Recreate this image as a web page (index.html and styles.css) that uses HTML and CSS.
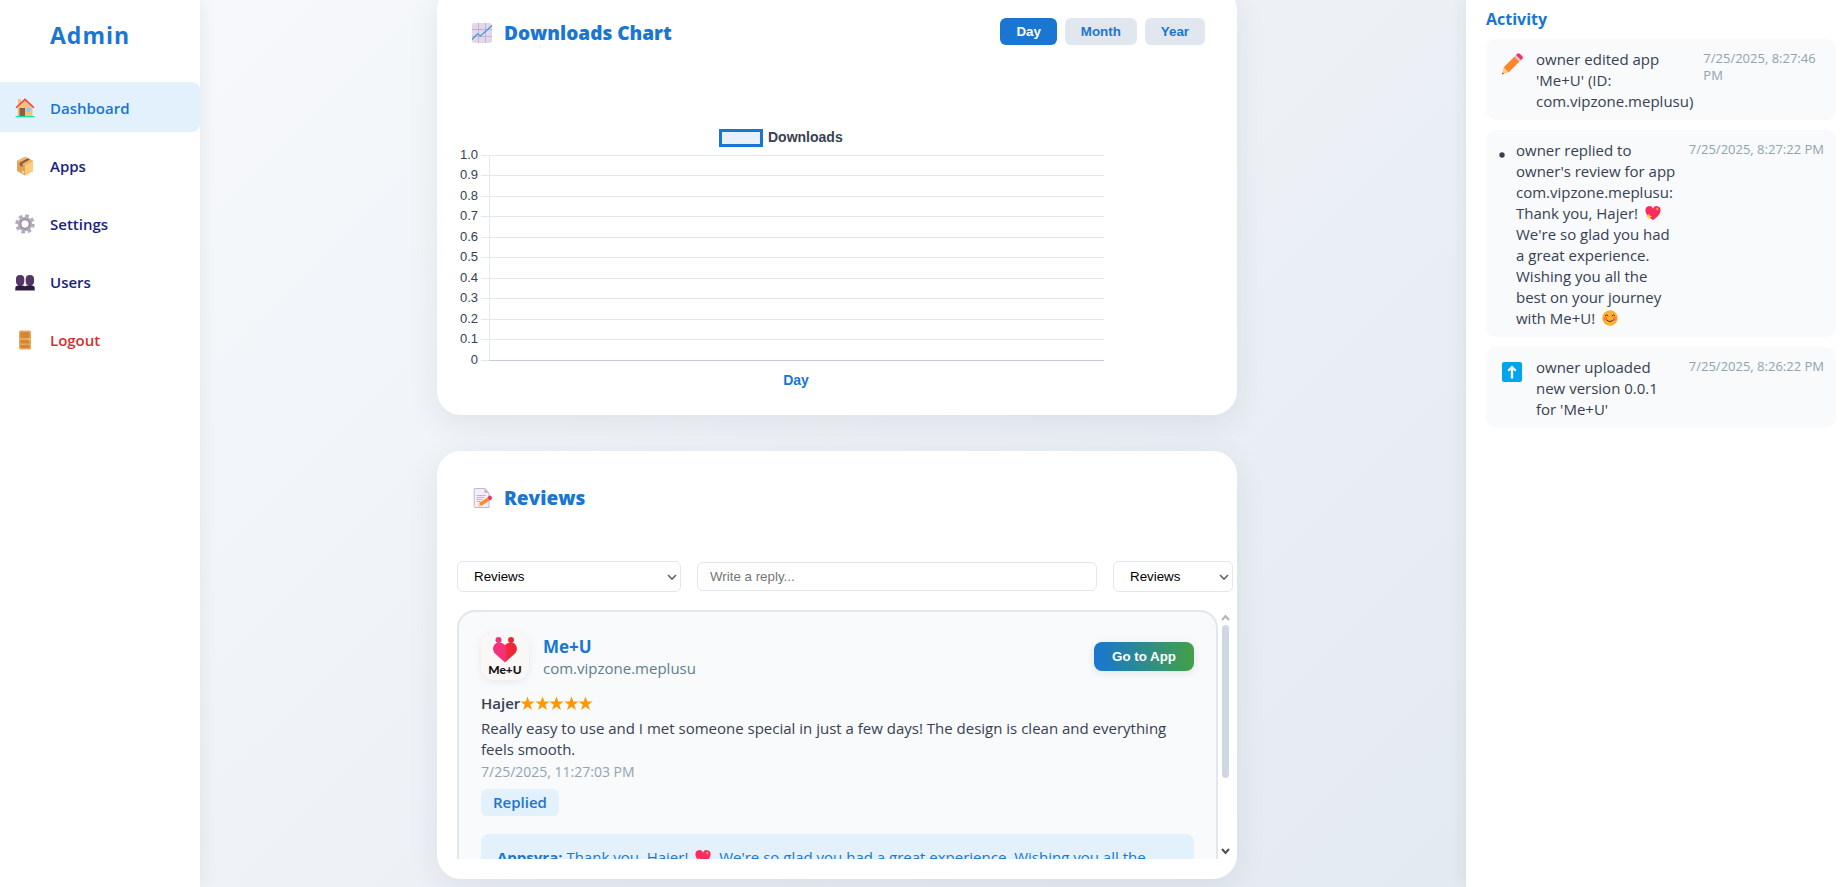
FILE: index.html
```html
<!DOCTYPE html>
<html lang="en">
<head>
<meta charset="utf-8">
<title>Admin</title>
<link rel="stylesheet" href="styles.css">
</head>
<body>
<svg class="defs" aria-hidden="true">
  <symbol id="heart" viewBox="0 0 16 16">
    <path d="M8 15.2C5 13 .4 9.600 .4 5.300a4 4 0 0 1 7.600-1.900 4 4 0 0 1 7.600 1.900C15.600 9.600 11 13 8 15.200Z" fill="#fb2b5f"/>
    <path d="m4 8.500.9 2.300 2.300.9-2.300.9L4 15l-.9-2.400-2.300-.9 2.300-.9ZM12.200 2.300l.5 1.300 1.300.5-1.300.5-.5 1.300-.5-1.300-1.300-.5 1.300-.5Z" fill="#ffd23c"/>
  </symbol>
</svg>
<div class="layout">
  <aside class="sidebar">
    <h1 class="brand">Admin</h1>
    <nav class="nav">
      <a class="nav-link active" href="#">
        <svg class="nav-icon" viewBox="0 0 20 20"><path d="M3 1h3v5H3z" fill="#f3c27d"/><path d="M2.500 9 10 2l7.500 7v9h-15z" fill="#f3c27d"/><path d="M1 9.800 10 1.400l9 8.400" fill="none" stroke="#fb3a3a" stroke-width="1.500"/><path d="M4.500 10h5.500v8H4.500z" fill="#8d5a4d"/><path d="M11.500 10h4v4h-4z" fill="#8cc8fb"/><path d="M.5 18h19v1.200H.5z" fill="#0eea98"/></svg>
        Dashboard</a>
      <a class="nav-link" href="#">
        <svg class="nav-icon" viewBox="0 0 20 20"><path d="M10 .8 18 5v10l-8 4.500L2 15V5z" fill="#e6a154"/><path d="M10 9.200 18 5v10l-8 4.500z" fill="#ffce7c"/><path d="M10 .8 18 5l-8 4.200L2 5z" fill="#f0b866"/><path d="m4.800 6.500 8-4.200 2.200 1.200-7.500 4.200V11l-2.700-1.500z" fill="#8d5a4d"/><path d="m7 14.700 2 1v1.800l-2-1z" fill="#f5e9dd"/></svg>
        Apps</a>
      <a class="nav-link" href="#">
        <svg class="nav-icon" viewBox="0 0 20 20"><g fill="none" stroke="#b4aabd"><circle cx="10" cy="10" r="8" stroke-width="3.500" stroke-dasharray="3.400 2.883"/><circle cx="10" cy="10" r="5.800" stroke-width="3"/><circle cx="10" cy="10" r="4.400" stroke="#9689a2" stroke-width="1.500"/></g></svg>
        Settings</a>
      <a class="nav-link" href="#">
        <svg class="nav-icon" viewBox="0 0 20 20"><g fill="#533566"><rect x="1" y="3" width="8.300" height="10.500" rx="4"/><rect x="10.700" y="3" width="8.300" height="10.500" rx="4"/><path d="M3.500 10h3v5h-3zM13.500 10h3v5h-3z"/></g><path d="M.3 18.500V16q0-2.500 3-2.500h3.900q2.300 0 2.800 1 .5-1 2.800-1h3.900q3 0 3 2.500v2.500z" fill="#321b41"/></svg>
        Users</a>
      <a class="nav-link logout" href="#">
        <svg class="nav-icon" viewBox="0 0 20 20"><rect x="4" y=".5" width="12" height="19" rx="1.500" fill="#eaa75a"/><path d="M5.500 2h9v6h-9zM5.500 10h9v3.500h-9zM5.500 15h9v3h-9z" fill="#d28638"/><circle cx="14" cy="9.500" r="1" fill="#ffcf66"/></svg>
        Logout</a>
    </nav>
  </aside>

  <main class="main">
    <section class="card">
      <header class="card-head">
        <h2 class="card-title">
          <svg class="title-icon" viewBox="0 0 20 20"><rect width="20" height="20" rx="2.500" fill="#e2d8ea"/><path d="M0 6.500h20M0 13.500h20M6.500 0v20M13.500 0v20" stroke="#c2b4cc"/><path d="m0 16.500 5.500-5.700L8.500 13 20 2.500" fill="none" stroke="#3b9be8" stroke-width="1.300"/></svg>
          Downloads Chart</h2>
        <div class="ranges">
          <button class="range selected" type="button">Day</button>
          <button class="range" type="button">Month</button>
          <button class="range" type="button">Year</button>
        </div>
      </header>
      <svg class="chart" viewBox="0 0 660 270" role="img" aria-label="Downloads by day">
        <rect class="swatch" x="263.500" y="5.500" width="41" height="15"/>
        <text class="legend" x="311" y="17">Downloads</text>
        <path class="grid" d="M24 30.500h623M24 50.500h623M24 71.500h623M24 91.500h623M24 112.500h623M24 132.500h623M24 153.500h623M24 173.500h623M24 194.500h623M24 214.500h623M24 235.500h8M32.500 30v205"/>
        <path class="axis" d="M32 235.500h615"/>
        <g class="ticks">
          <text x="21" y="34">1.0</text><text x="21" y="54">0.9</text><text x="21" y="75">0.8</text><text x="21" y="95">0.7</text><text x="21" y="116">0.6</text><text x="21" y="136">0.5</text><text x="21" y="157">0.4</text><text x="21" y="177">0.3</text><text x="21" y="198">0.2</text><text x="21" y="218">0.1</text><text x="21" y="239">0</text>
        </g>
        <text class="axis-title" x="339" y="260">Day</text>
      </svg>
    </section>

    <section class="card">
      <header class="card-head">
        <h2 class="card-title">
          <svg class="title-icon" viewBox="0 0 20 20"><path d="M3 .5h10L17 5v14.500H3q-.8 0-.8-.8V1.300Q2.200.5 3 .5Z" fill="#f3eef8" stroke="#c3b6cd"/><path d="M12.500.5V5H17z" fill="#c3b6cd"/><path d="M4.500 7.500h9M4.500 9.500h8M4.500 11.500h6M4.500 13.500h4" stroke="#b3a4bf" stroke-width=".8"/><path d="m7 15 8.500-5.500 2 3L9 18z" fill="#ff8b2c"/><path d="m7 15 2 3-3 .7z" fill="#ffce7c"/><path d="m15.500 9.500 1.500-1.700q1-1 2.200.5l.6 1.200q.7 1.500-.8 2.200l-1.500.8z" fill="#f8315f"/></svg>
          Reviews</h2>
      </header>
      <div class="filters">
        <select class="field app-filter" aria-label="App"><option>Reviews</option></select>
        <input class="field reply-input" type="text" placeholder="Write a reply..." aria-label="Write a reply">
        <select class="field sort-filter" aria-label="Sort"><option>Reviews</option></select>
      </div>
      <div class="review-list">
        <article class="review">
          <header class="app-row">
            <svg class="app-logo" viewBox="0 0 48 48" role="img" aria-label="Me+U logo">
              <defs><linearGradient id="lg"><stop offset=".48" stop-color="#f5317a"/><stop offset=".62" stop-color="#ee2737"/></linearGradient></defs>
              <rect width="48" height="48" rx="14" fill="#faf8f6"/>
              <circle cx="17.500" cy="8" r="3" fill="#f5317a"/><circle cx="30" cy="8" r="3" fill="#ee2737"/>
              <path d="M24 30.500 14 21.500c-5.500-6.500 2-15.500 10-8.500 8-7 15.500 2 10 8.500z" fill="url(#lg)"/>
              <text class="logo-text" x="24" y="42">Me+U</text>
            </svg>
            <div class="app-info">
              <h3 class="app-name">Me+U</h3>
              <p class="app-package">com.vipzone.meplusu</p>
            </div>
            <button class="go" type="button">Go to App</button>
          </header>
          <div class="author">Hajer<svg class="stars" viewBox="0 0 75 15" role="img" aria-label="5 stars"><defs><path id="star" d="m7.500.5 1.800 5h5.200l-4.200 3.200 1.600 5.200-4.400-3.200-4.400 3.200 1.600-5.200L.5 5.500h5.200z" fill="#ff9800"/></defs><use href="#star"/><use href="#star" x="15"/><use href="#star" x="29"/><use href="#star" x="44"/><use href="#star" x="58"/></svg></div>
          <p class="review-text">Really easy to use and I met someone special in just a few days! The design is clean and everything feels smooth.</p>
          <time class="review-date">7/25/2025, 11:27:03 PM</time>
          <div><span class="badge">Replied</span></div>
          <p class="reply"><strong>Appsyra:</strong> Thank you, Hajer! <svg class="emoji" viewBox="0 0 16 16"><use href="#heart"/></svg> We're so glad you had a great experience. Wishing you all the best on your journey with Me+U!</p>
        </article>
        <div class="scrollbar" aria-hidden="true">
          <svg class="arrow" viewBox="0 0 9 15"><path d="m1 10 3.500-4L8 10" stroke="#b4b4b4"/></svg>
          <div class="thumb"></div>
          <svg class="arrow" viewBox="0 0 9 15"><path d="m1 5 3.500 4L8 5" stroke="#505050"/></svg>
        </div>
      </div>
    </section>
  </main>

  <aside class="activity">
    <h2 class="activity-title">Activity</h2>
    <ul class="feed">
      <li class="event">
        <svg class="event-icon" viewBox="0 0 22 22"><path d="m2.500 14.500 11-11 5 5-11 11z" fill="#ff862d"/><path d="m2.500 14.500 5 5-6.500 2z" fill="#ffce7c"/><path d="m13.500 3.500 2-2 5 5-2 2z" fill="#d3c6da"/><path d="m15 2 1.200-1.200q1.300-1.200 2.600 0l2.500 2.500q1.200 1.300 0 2.600L20 7z" fill="#f8315f"/><path d="m1 21.500.7-2 1.300 1.300z" fill="#533566"/></svg>
        <p class="event-text">owner edited app 'Me+U' (ID: com.vipzone.meplusu)</p>
        <time class="event-time">7/25/2025, 8:27:46 PM</time>
      </li>
      <li class="event">
        <svg class="event-dot" viewBox="0 0 6 22"><circle cx="3" cy="13" r="2.700" fill="#374151"/></svg>
        <p class="event-text">owner replied to owner's review for app com.vipzone.meplusu: Thank you, Hajer! <svg class="emoji" viewBox="0 0 16 16"><use href="#heart"/></svg> We're so glad you had a great experience. Wishing you all the best on your journey with Me+U! <svg class="emoji" viewBox="0 0 16 16"><circle cx="8" cy="8" r="7.700" fill="#ffb02e"/><circle cx="3.300" cy="8.700" r="2" fill="#ff7a3d"/><circle cx="12.700" cy="8.700" r="2" fill="#ff7a3d"/><path d="M3 6.200q1.600-2.800 3.300 0M9.700 6.200q1.700-2.800 3.300 0M4.600 9.800q3.400 3.400 6.800 0" fill="none" stroke="#402a32"/></svg></p>
        <time class="event-time">7/25/2025, 8:27:22 PM</time>
      </li>
      <li class="event">
        <svg class="event-icon" viewBox="0 0 22 22"><rect x="1" y="1" width="20" height="20" rx="2" fill="#00a6ed"/><path d="M11 4.500 15.500 9l-1.300 1.400-2-1.900V17.500H9.800v-9l-2 1.900L6.500 9z" fill="#fff"/></svg>
        <p class="event-text">owner uploaded new version 0.0.1 for 'Me+U'</p>
        <time class="event-time">7/25/2025, 8:26:22 PM</time>
      </li>
    </ul>
  </aside>
</div>
</body>
</html>
```

FILE: styles.css
```css
* { box-sizing: border-box; }

body {
  margin: 0;
  font-family: "Open Sans", "Noto Sans", sans-serif;
  font-size: 15px;
  line-height: 21px;
  color: #374151;
}

h1, h2, h3, p, ul { margin: 0; padding: 0; }

.defs { display: none; }

.layout {
  display: grid;
  grid-template-columns: 200px 1fr 382px;
  height: 100vh;
  overflow: hidden;
  background: linear-gradient(135deg, #f8fafc 0%, #e0e7ef 100%);
}

/* Sidebar */
.sidebar {
  background: #fff;
  box-shadow: 2px 0 16px rgba(30, 41, 59, 0.07);
}

.brand {
  padding: 19px 0 31px 50px;
  font-size: 23px;
  line-height: 32px;
  letter-spacing: 1px;
  color: #1976d2;
}

.nav {
  display: flex;
  flex-direction: column;
  gap: 8px;
}

.nav-link {
  display: flex;
  align-items: center;
  gap: 15px;
  height: 50px;
  padding: 2px 16px 0 15px;
  border-radius: 0 8px 8px 0;
  font-weight: 600;
  color: #1a237e;
  text-decoration: none;
}

.nav-link.active {
  background: #e3f1fd;
  color: #1976d2;
}

.nav-link.logout { color: #d32f2f; }

.nav-icon { width: 20px; height: 20px; }

/* Main column */
.main {
  display: flex;
  flex-direction: column;
  align-items: center;
  gap: 36px;
  margin-top: -14px;
  padding-left: 8px;
}

.card {
  flex-shrink: 0;
  width: 100%;
  max-width: 800px;
  padding: 20px;
  border-radius: 24px;
  background: #fff;
  box-shadow: 0 8px 32px rgba(30, 41, 59, 0.08);
}

.card-head {
  display: flex;
  justify-content: space-between;
  align-items: flex-start;
  padding: 12px;
}

.card-title {
  display: flex;
  align-items: center;
  gap: 12px;
  padding-left: 3px;
  font-size: 19px;
  font-weight: 800;
  line-height: 30px;
  color: #1976d2;
}

.title-icon { width: 20px; height: 20px; }

.ranges { display: flex; gap: 8px; }

.range {
  padding: 6px 16px;
  border: 0;
  border-radius: 6px;
  background: #e0e7ef;
  color: #1976d2;
  font-family: "Liberation Sans", Arial, sans-serif;
  font-weight: bold;
}

.range.selected { background: #1976d2; color: #fff; }

/* Chart */
.chart {
  display: block;
  width: 100%;
  max-width: 660px;
  margin-top: 65px;
  font-family: "Liberation Sans", Arial, sans-serif;
  font-size: 13px;
  fill: #374151;
}

.swatch { fill: #e8f1fb; stroke: #1976d2; stroke-width: 3px; }
.legend { font-size: 14px; font-weight: bold; }
.grid { fill: none; stroke: #e0e7ef; }
.axis { fill: none; stroke: #c5cdd6; }
.ticks { text-anchor: end; }

.axis-title {
  font-size: 14px;
  font-weight: bold;
  text-anchor: middle;
  fill: #1976d2;
}

/* Reviews */
.filters {
  display: flex;
  align-items: center;
  gap: 16px;
  margin: 36px -16px 18px 0;
}

.field {
  min-width: 0;
  border: 1px solid #e0e7ef;
  border-radius: 6px;
  background: #fff;
  font-family: "Liberation Sans", Arial, sans-serif;
}

.reply-input { flex: 1; height: 29px; padding: 0 12px; }

select.field {
  height: 31px;
  padding: 0 16px;
  appearance: none;
  background: #fff url("data:image/svg+xml,%3Csvg xmlns='http://www.w3.org/2000/svg' width='10' height='6'%3E%3Cpath d='m1 1 4 4 4-4' fill='none' stroke='%23666' stroke-width='1.700'/%3E%3C/svg%3E") no-repeat right 3px center;
}

.app-filter { width: 224px; }
.sort-filter { width: 120px; }

.review-list {
  display: flex;
  height: 249px;
  margin-right: -16px;
  overflow: hidden;
}

.review {
  flex: 1;
  align-self: flex-start;
  padding: 20px 22px;
  border: 2px solid #e0e7ef;
  border-radius: 18px;
  background: #f8fafc;
}

.app-row {
  display: flex;
  align-items: center;
  gap: 14px;
}

.app-logo {
  width: 48px;
  height: 48px;
  border-radius: 14px;
  box-shadow: 0 2px 8px rgba(30, 41, 59, 0.08);
}

.logo-text {
  font-family: Lato, sans-serif;
  font-size: 12px;
  font-weight: 900;
  text-anchor: middle;
  fill: #151515;
}

.app-info { flex: 1; padding-top: 2px; }
.app-name { font-size: 17px; line-height: 22px; color: #1976d2; }
.app-package { color: #607d8b; }

.go {
  height: 29px;
  padding: 0 18px;
  border: 0;
  border-radius: 8px;
  background: linear-gradient(90deg, #1976d2, #43a047);
  box-shadow: 0 2px 8px rgba(30, 41, 59, 0.1);
  color: #fff;
  font-family: "Liberation Sans", Arial, sans-serif;
  font-weight: bold;
}

.author {
  display: flex;
  align-items: center;
  margin-top: 13px;
  font-weight: 600;
}

.stars { width: 75px; height: 15px; }
.review-text { margin-top: 4px; }

.review-date {
  display: block;
  margin-top: 1px;
  font-size: 14px;
  color: #90a4ae;
}

.badge {
  display: inline-block;
  margin: 7px 0 18px;
  padding: 3px 12px;
  border-radius: 6px;
  background: #e3f1fd;
  color: #1976d2;
  font-weight: 600;
}

.reply {
  padding: 13px 16px;
  border-radius: 8px;
  background: #e3f1fd;
  color: #1976d2;
}

.emoji {
  width: 16px;
  height: 16px;
  margin: 0 4px 0 3px;
  vertical-align: -2px;
}

.scrollbar {
  display: flex;
  flex-direction: column;
  align-items: center;
  width: 15px;
}

.arrow { width: 9px; height: 15px; fill: none; stroke-width: 2px; }

.thumb {
  width: 7px;
  height: 153px;
  margin-bottom: auto;
  border-radius: 4px;
  background: #cfd8e0;
}

/* Activity */
.activity {
  padding: 8px 12px 0 20px;
  background: #fff;
  box-shadow: -2px 0 16px rgba(30, 41, 59, 0.07);
}

.activity-title {
  margin-bottom: 9px;
  font-size: 16px;
  line-height: 22px;
  color: #1976d2;
}

.feed {
  display: flex;
  flex-direction: column;
  gap: 10px;
  list-style: none;
}

.event {
  display: flex;
  align-items: flex-start;
  padding: 10px 12px 8px;
  border-radius: 10px;
  background: #f8fafc;
}

.event-icon {
  flex-shrink: 0;
  width: 22px;
  height: 22px;
  margin: 4px 13px 0 3px;
}

.event-dot {
  flex-shrink: 0;
  width: 6px;
  height: 22px;
  margin: 2px 11px 0 1px;
}

.event-text { flex: 1; }

.event-time {
  padding-top: 1px;
  margin-left: 10px;
  font-size: 13px;
  line-height: 17px;
  color: #90a4ae;
}
```
